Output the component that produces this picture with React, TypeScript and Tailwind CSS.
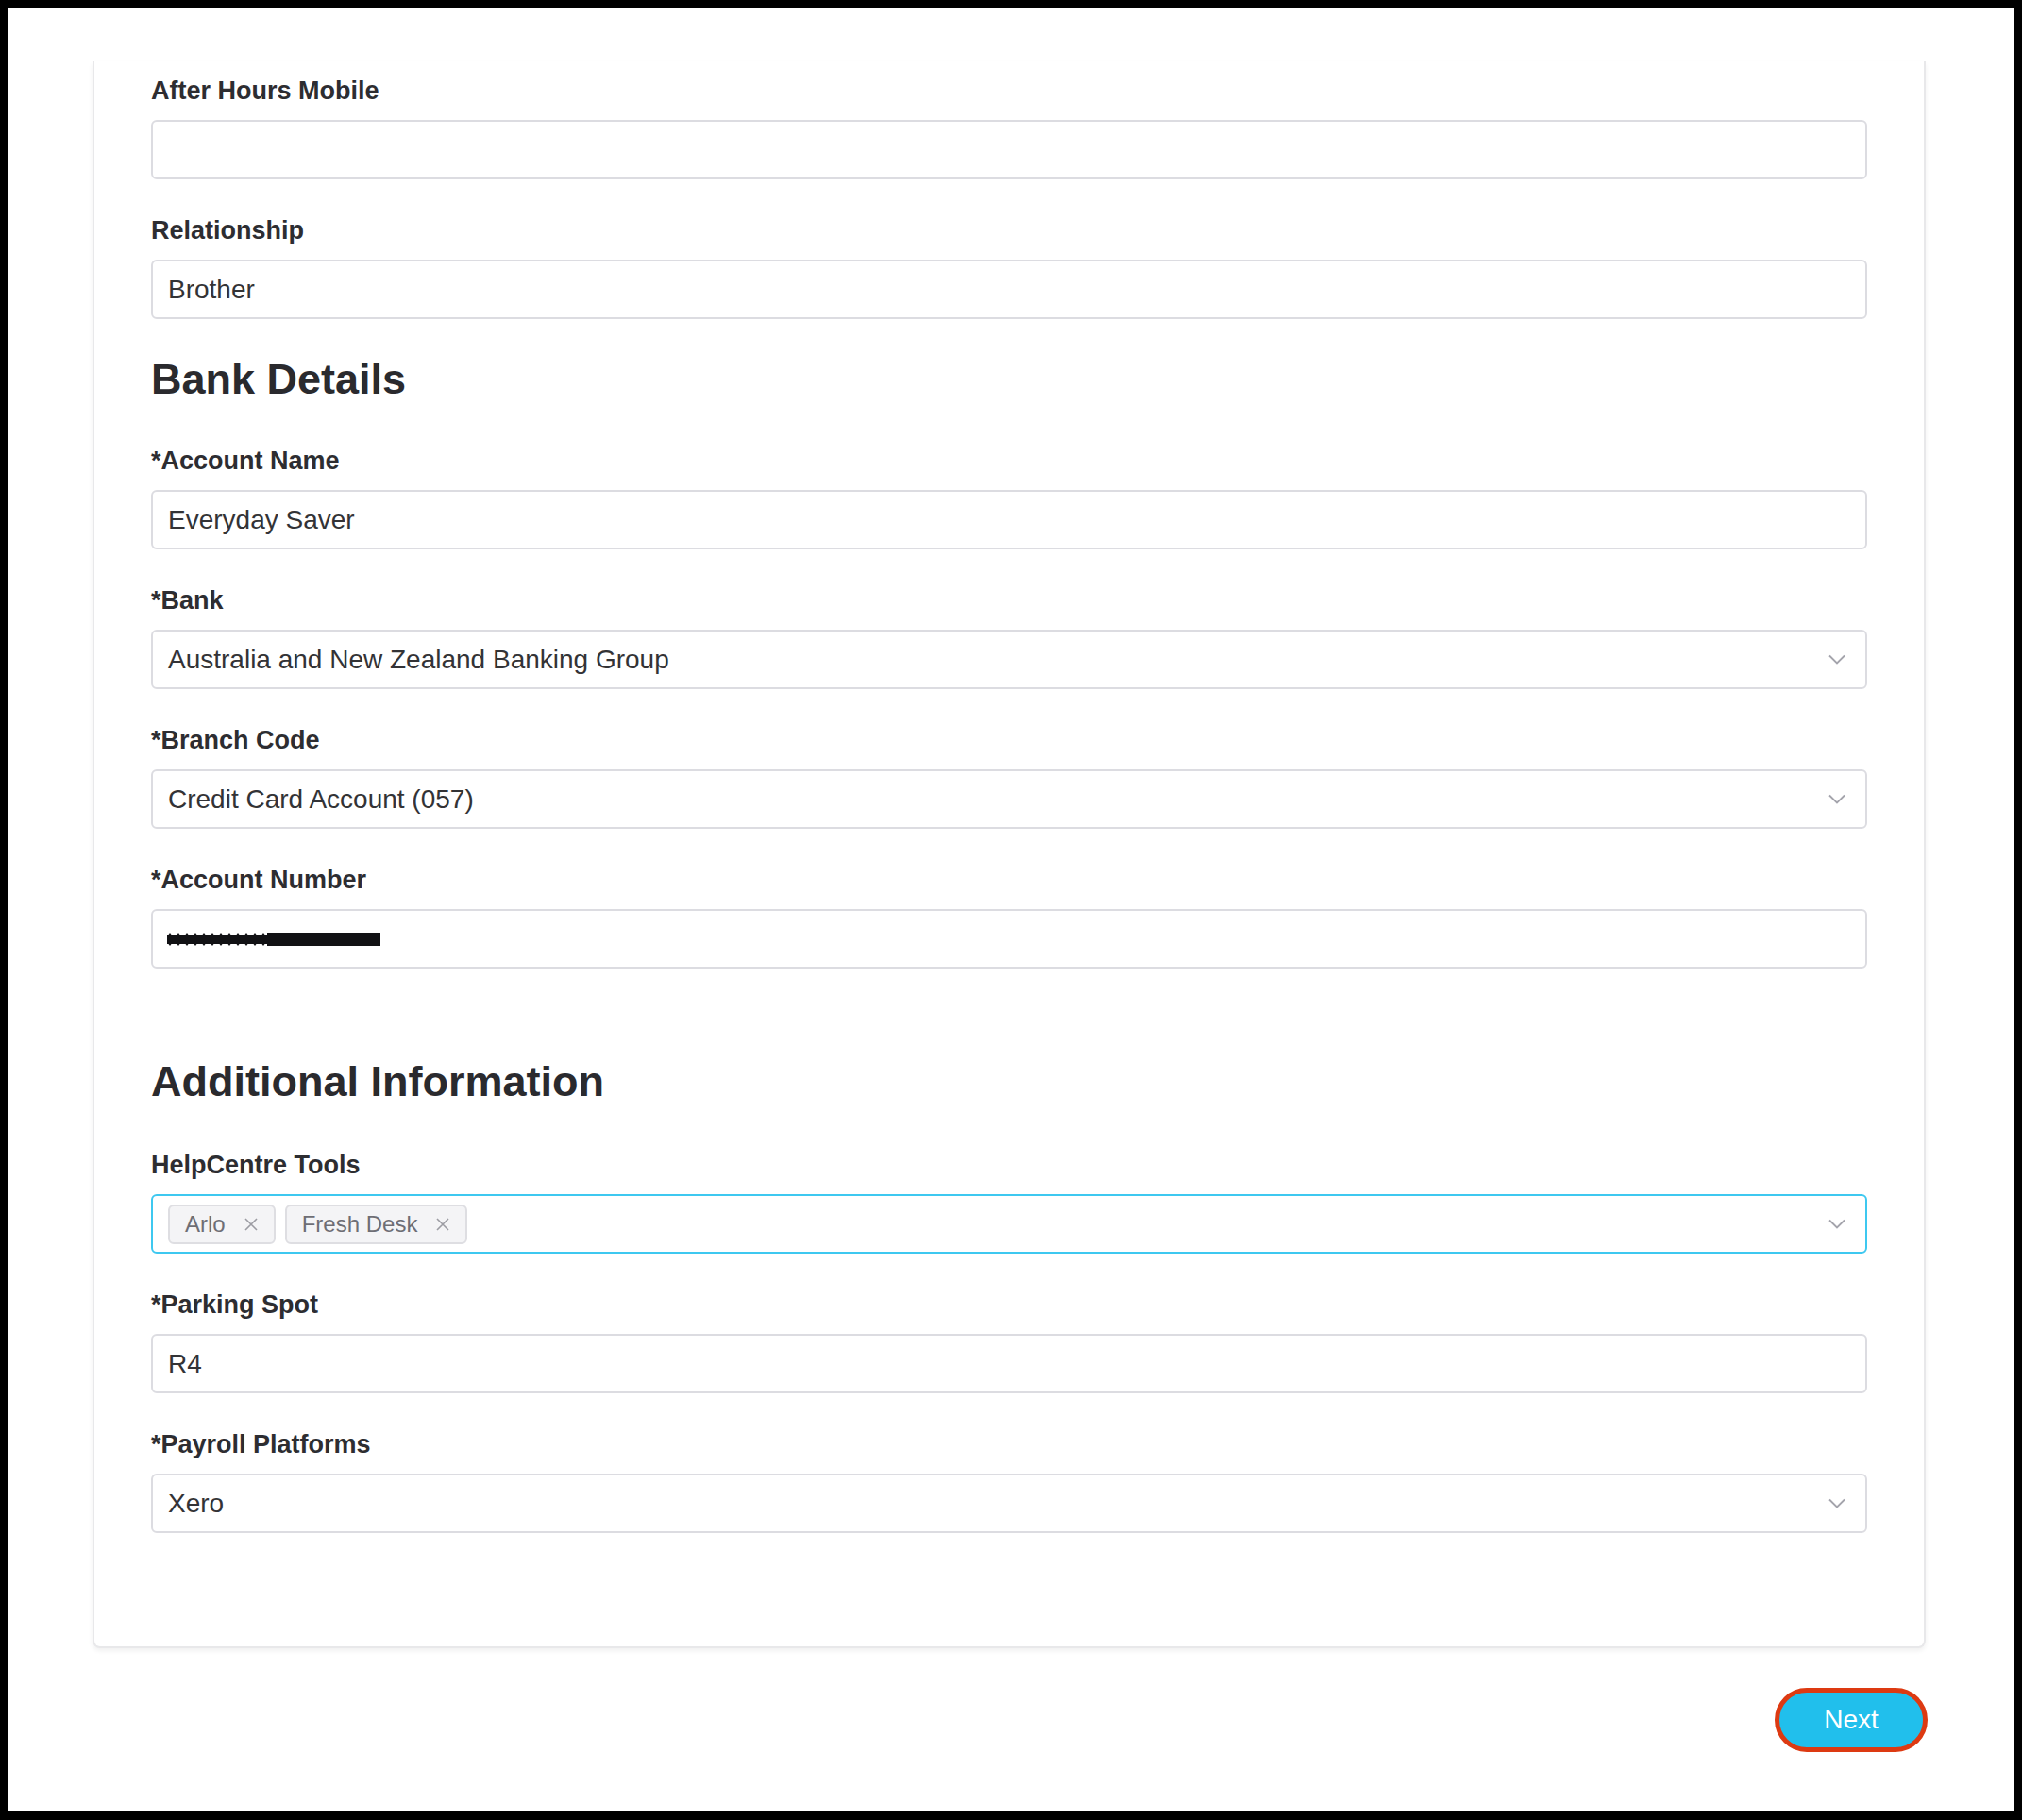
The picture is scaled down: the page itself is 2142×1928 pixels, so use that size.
import React from "react";

const font = { fontFamily: '"Liberation Sans", Arial, sans-serif' };

function Chevron() {
    return (
        <svg width="18" height="11" viewBox="0 0 18 11" className="shrink-0">
            <path d="M1 1.5 L9 9.5 L17 1.5" fill="none" stroke="#a4a4ac" strokeWidth="1.8" />
        </svg>
    );
}

function Cross() {
    return (
        <svg width="14" height="14" viewBox="0 0 14 14" className="shrink-0">
            <path d="M1 1 L13 13 M13 1 L1 13" fill="none" stroke="#9c9ca3" strokeWidth="1.6" />
        </svg>
    );
}

function Redacted() {
    // masked account number: a black bar, the first part with a jagged edge
    const teeth: string[] = [];
    for (let x = 0; x < 106; x += 9) {
        teeth.push(`M${x} 4 L${x + 3} 0 L${x + 6} 4 Z`);
        teeth.push(`M${x} 10 L${x + 3} 14 L${x + 6} 10 Z`);
    }
    return (
        <svg width="226" height="14" viewBox="0 0 226 14">
            <rect x="0" y="2" width="106" height="10" fill="#111114" />
            <rect x="106" y="0" width="120" height="14" fill="#111114" />
            <path d={teeth.join(" ")} fill="#111114" />
        </svg>
    );
}

function Field({ label, children }: { label: string; children: React.ReactNode }) {
    return (
        <div>
            <div className="text-[27px] leading-[32px] font-bold text-[#2d2d31]">{label}</div>
            <div className="mt-[15px]">{children}</div>
        </div>
    );
}

function TextBox({ value, select }: { value?: React.ReactNode; select?: boolean }) {
    return (
        <div className="flex h-[63px] items-center justify-between rounded-[6px] border-2 border-[#dcdce1] bg-white pl-[16px] pr-[21px] text-[28px] text-[#333336]">
            <span>{value}</span>
            {select && <Chevron />}
        </div>
    );
}

function Tag({ label }: { label: string }) {
    return (
        <div className="flex h-[42px] items-center gap-[20px] rounded-[6px] border-2 border-[#dedee2] bg-[#f4f4f6] pl-[16px] pr-[17px] text-[24px] text-[#6e6e75]">
            <span>{label}</span>
            <Cross />
        </div>
    );
}

export default function App() {
    return (
        <main className="min-h-[1928px] bg-black p-[9px] pb-[10px]" style={font}>
            <div className="h-[1909px] bg-white pt-[56px]">

                {/* FORM CARD */}
                <section className="ml-[89px] w-[1942px] rounded-b-[8px] border-2 border-t-0 border-[#e8e8ea] bg-white px-[60px] pb-[120px] pt-[15px] shadow-[0_3px_5px_rgba(0,0,0,0.06)]">
                    <div className="flex flex-col gap-[38px]">
                        <Field label="After Hours Mobile">
                            <TextBox />
                        </Field>
                        <Field label="Relationship">
                            <TextBox value="Brother" />
                        </Field>
                    </div>

                    <h2 className="mt-[37px] text-[45px] leading-[54px] font-bold text-[#2a2a2e]">Bank Details</h2>

                    <div className="mt-[43px] flex flex-col gap-[38px]">
                        <Field label="*Account Name">
                            <TextBox value="Everyday Saver" />
                        </Field>
                        <Field label="*Bank">
                            <TextBox value="Australia and New Zealand Banking Group" select />
                        </Field>
                        <Field label="*Branch Code">
                            <TextBox value="Credit Card Account (057)" select />
                        </Field>
                        <Field label="*Account Number">
                            <div className="flex h-[63px] items-center rounded-[6px] border-2 border-[#dcdce1] bg-white pl-[15px]">
                                <Redacted />
                            </div>
                        </Field>
                    </div>

                    <h2 className="mt-[93px] text-[45px] leading-[54px] font-bold text-[#2a2a2e]">Additional Information</h2>

                    <div className="mt-[45px] flex flex-col gap-[38px]">
                        <Field label="HelpCentre Tools">
                            <div className="flex h-[63px] items-center justify-between rounded-[6px] border-2 border-[#3ec8f0] bg-white pl-[16px] pr-[21px]">
                                <div className="flex gap-[10px]">
                                    <Tag label="Arlo" />
                                    <Tag label="Fresh Desk" />
                                </div>
                                <Chevron />
                            </div>
                        </Field>
                        <Field label="*Parking Spot">
                            <TextBox value="R4" />
                        </Field>
                        <Field label="*Payroll Platforms">
                            <TextBox value="Xero" select />
                        </Field>
                    </div>
                </section>

                {/* ACTIONS */}
                <div className="ml-[89px] mt-[42px] flex w-[1944px] justify-end">
                    <button className="h-[68px] w-[162px] rounded-full border-[5px] border-[#dd3a12] bg-[#21bfec] text-[28px] font-normal text-white">
                        Next
                    </button>
                </div>
            </div>
        </main>
    );
}
